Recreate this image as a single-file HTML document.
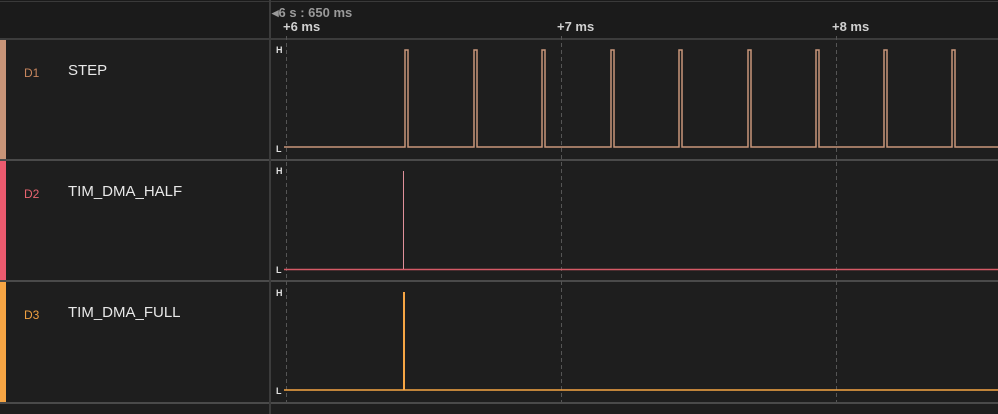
<!DOCTYPE html><html><head><style>
body{margin:0;width:998px;height:414px;background:#1e1e1e;overflow:hidden;font-family:"Liberation Sans",sans-serif;position:relative}
.a{position:absolute}
</style></head><body>
<div class="a" style="left:0;top:0;width:998px;height:38px;background:#1b1b1b"></div>
<div class="a" style="left:0;top:1px;width:998px;height:1px;background:#3a3a3a"></div>
<div class="a" style="left:0;top:38px;width:998px;height:2px;background:#3c3c3c"></div>
<div class="a" style="left:0;top:159px;width:998px;height:2px;background:#4a4a4a"></div>
<div class="a" style="left:0;top:280px;width:998px;height:2px;background:#4a4a4a"></div>
<div class="a" style="left:0;top:402px;width:998px;height:2px;background:#4a4a4a"></div>
<div class="a" style="left:0;top:40px;width:6px;height:119px;background:#c89478"></div>
<div class="a" style="left:0;top:161px;width:6px;height:119px;background:#ec5a6e"></div>
<div class="a" style="left:0;top:282px;width:6px;height:120px;background:#f6a544"></div>
<div class="a" style="left:269px;top:0;width:2px;height:414px;background:#3c3c3c"></div>
<div class="a" style="left:24px;top:66px;font-size:12px;color:#c8865e">D1</div>
<div class="a" style="left:68px;top:62px;font-size:15px;color:#e8e8e8">STEP</div>
<div class="a" style="left:24px;top:187px;font-size:12px;color:#e86470">D2</div>
<div class="a" style="left:68px;top:183px;font-size:15px;color:#e8e8e8">TIM_DMA_HALF</div>
<div class="a" style="left:24px;top:308px;font-size:12px;color:#f0a040">D3</div>
<div class="a" style="left:68px;top:304px;font-size:15px;color:#e8e8e8">TIM_DMA_FULL</div>
<div class="a" style="left:272px;top:5px;font-size:13px;font-weight:bold;color:#9a9a9a">◂6 s : 650 ms</div>
<div class="a" style="left:283px;top:19px;font-size:13px;font-weight:bold;color:#d0d0d0">+6 ms</div>
<div class="a" style="left:557px;top:19px;font-size:13px;font-weight:bold;color:#d0d0d0">+7 ms</div>
<div class="a" style="left:832px;top:19px;font-size:13px;font-weight:bold;color:#d0d0d0">+8 ms</div>
<svg class="a" style="left:0;top:0" width="998" height="414">
<g stroke="#555" stroke-dasharray="4,3" stroke-width="1">
<line x1="286.5" y1="36" x2="286.5" y2="402"/><line x1="561.5" y1="36" x2="561.5" y2="402"/><line x1="836.5" y1="36" x2="836.5" y2="402"/></g>
<g font-family="Liberation Sans" font-size="9" font-weight="bold" fill="#e0e0e0">
<text x="276" y="53">H</text><text x="276" y="152">L</text>
<text x="276" y="174">H</text><text x="276" y="273">L</text>
<text x="276" y="296">H</text><text x="276" y="394">L</text></g>
<polyline fill="none" stroke="#c8957a" stroke-width="1.5" points="284,147 405,147 405,50 408,50 408,147 474,147 474,50 477,50 477,147 542,147 542,50 545,50 545,147 611,147 611,50 614,50 614,147 679,147 679,50 682,50 682,147 748,147 748,50 751,50 751,147 816,147 816,50 819,50 819,147 884,147 884,50 887,50 887,147 952,147 952,50 955,50 955,147 998,147"/>
<line x1="284" y1="269.5" x2="998" y2="269.5" stroke="#d65a66" stroke-width="1.5"/>
<line x1="403.5" y1="171" x2="403.5" y2="269" stroke="#e0909a" stroke-width="1"/>
<line x1="284" y1="390" x2="998" y2="390" stroke="#f6a544" stroke-width="1.5"/>
<line x1="404" y1="292" x2="404" y2="390" stroke="#f6a544" stroke-width="2"/>
</svg>
</body></html>
